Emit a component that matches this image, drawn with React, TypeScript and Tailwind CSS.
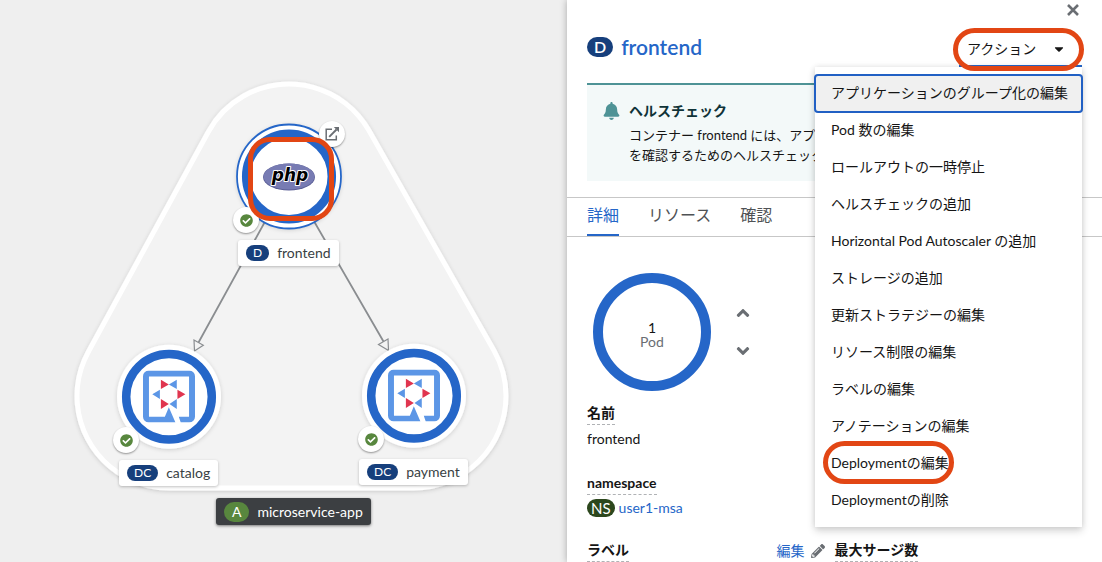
import React from "react";
import {
  FaAngleDown,
  FaAngleUp,
  FaBell,
  FaCaretDown,
  FaCheckCircle,
  FaPencilAlt,
} from "react-icons/fa";

const actions = [
  "アプリケーションのグループ化の編集",
  "Pod 数の編集",
  "ロールアウトの一時停止",
  "ヘルスチェックの追加",
  "Horizontal Pod Autoscaler の追加",
  "ストレージの追加",
  "更新ストラテジーの編集",
  "リソース制限の編集",
  "ラベルの編集",
  "アノテーションの編集",
  "Deploymentの編集",
  "Deploymentの削除",
];

function QuarkusIcon({ x, y }: { x: number; y: number }) {
  return (
    <svg x={x} y={y} width="52" height="52" viewBox="0 0 157 157">
      <path
        fill="#5c96e6"
        d="M78 111 98 157H17A17 17 0 0 1 0 140V17A17 17 0 0 1 17 0H140A17 17 0 0 1 157 17V140A17 17 0 0 1 140 157H114L108 140H139V18H18V140H66Z"
      />
      <path fill="#e0354f" d="M54 28V56L78 42ZM104 58V86L128 72ZM54 86V116L78 101Z" />
      <path fill="#5c96e6" d="M102 28V56L78 42ZM51 58V86L28 72ZM102 86V116L80 101Z" />
    </svg>
  );
}

function PhpIcon() {
  return (
    <g>
      <ellipse cx="289" cy="177" rx="26" ry="13.5" fill="#5b5f96" />
      <ellipse cx="289" cy="176.600" rx="25.500" ry="13" fill="#777bb3" />
      <text
        x="290"
        y="181"
        textAnchor="middle"
        fill="#000"
        stroke="#fff"
        strokeWidth="2"
        strokeLinejoin="round"
        paintOrder="stroke"
        className="font-['DejaVu_Sans',sans-serif] text-[17px] font-bold italic"
      >
        php
      </text>
    </g>
  );
}

function StatusBadge({ className }: { className: string }) {
  return (
    <span
      className={`absolute flex size-[26px] items-center justify-center rounded-full bg-white shadow-[0_1px_2px_rgba(0,0,0,0.4)] ${className}`}
    >
      <FaCheckCircle className="size-[13px] text-[#58873e]" />
    </span>
  );
}

function NodeLabel({ kind, name, className }: { kind: string; name: string; className: string }) {
  return (
    <div
      className={`absolute flex h-[26px] items-center gap-2 rounded-[3px] bg-white px-2 text-sm whitespace-nowrap text-[#393f44] shadow-[0_1px_3px_rgba(0,0,0,0.25)] ${className}`}
    >
      <span className="rounded-full bg-[#163f7c] px-[7px] text-xs leading-4 text-white">{kind}</span>
      {name}
    </div>
  );
}

function Topology() {
  const hull = "289,176 169,396 414,396";
  return (
    <section aria-label="トポロジー" className="relative min-w-0 flex-1 overflow-hidden bg-[#efefef]">
      <svg className="absolute top-0 left-0" width="567" height="562" viewBox="0 0 567 562">
        <defs>
          <filter id="soft" filterUnits="userSpaceOnUse" x="0" y="0" width="567" height="562">
            <feDropShadow dx="0" dy="1" stdDeviation="2" floodColor="#000" floodOpacity="0.16" />
          </filter>
        </defs>
        <g strokeLinejoin="round">
          <polygon points={hull} fill="#fff" stroke="#fff" strokeWidth="189" filter="url(#soft)" />
          <polygon points={hull} fill="#f3f3f3" stroke="#f3f3f3" strokeWidth="179" />
        </g>
        <g stroke="#8a8d90" strokeWidth="1.800" fill="none">
          <path d="M289 178 198.500 342.500M289 178 383.500 341.500" />
          <path strokeWidth="1.200" fill="#f3f3f3" d="M194.500 351 194 340 203.300 345.200ZM388.500 350.500 378.500 344.500 388 339Z" />
        </g>
        <g filter="url(#soft)" fill="#fff">
          <circle cx="289" cy="176.500" r="52.500" />
          <circle cx="169" cy="396.700" r="52" />
          <circle cx="414" cy="395.700" r="52" />
        </g>
        <g fill="none" stroke="#2566c8">
          <circle cx="289" cy="176.500" r="52" strokeWidth="1.800" />
          <g strokeWidth="8.500">
            <circle cx="289" cy="176.500" r="42.800" />
            <circle cx="169" cy="396.700" r="42.800" />
            <circle cx="414" cy="395.700" r="42.800" />
          </g>
        </g>
        <PhpIcon />
        <QuarkusIcon x={143} y={370.5} />
        <QuarkusIcon x={388} y={369.5} />
      </svg>

      <a
        href="#open"
        aria-label="URL を開く"
        className="absolute top-[121px] left-[319px] flex size-[26px] items-center justify-center rounded-full bg-white shadow-[0_1px_2px_rgba(0,0,0,0.4)]"
      >
        <svg width="14" height="14" viewBox="0 0 14 14" fill="none" stroke="#6a6e73">
          <path strokeWidth="1.500" d="M7 2.200H1.200V12.800H11.300V8.500" />
          <path strokeWidth="1.900" d="M4.200 9.800 11.500 2.500" />
          <path fill="#6a6e73" stroke="none" d="M8.800 0H14V5.200Z" />
        </svg>
      </a>
      <StatusBadge className="top-[207px] left-[233px]" />
      <StatusBadge className="top-[427px] left-[113px]" />
      <StatusBadge className="top-[426px] left-[358px]" />
      <div className="absolute top-[137px] left-[248px] h-[84px] w-[86px] rounded-[22px] border-5 border-[#e24614]" />

      <NodeLabel kind="D" name="frontend" className="top-[240px] left-[238px]" />
      <NodeLabel kind="DC" name="catalog" className="top-[460px] left-[119px]" />
      <NodeLabel kind="DC" name="payment" className="top-[459px] left-[359px]" />
      <div className="absolute top-[498px] left-[216px] flex h-[27px] items-center gap-2 rounded-[3px] bg-[#3c3f42] px-2 text-sm whitespace-nowrap text-white shadow-[0_1px_3px_rgba(0,0,0,0.5)]">
        <span className="rounded-full bg-[#58873e] px-2 leading-5">A</span>
        <span>microservice-app</span>
      </div>
    </section>
  );
}

function ActionMenu() {
  return (
    <div className="relative">
      <button
        type="button"
        aria-expanded="true"
        className="flex h-[33px] w-[123px] items-center justify-between border-b-2 border-[#2566c8] pr-4 pb-[2px] pl-2 text-sm"
      >
        アクション
        <FaCaretDown className="size-[14px]" />
      </button>
      <div className="pointer-events-none absolute -top-[6px] -right-[2px] z-20 h-[43px] w-[131px] rounded-[22px] border-5 border-[#e24614]" />
      <ul className="absolute top-full right-0 z-10 w-[267px] bg-white py-2 shadow-[0_4px_8px_rgba(3,3,3,0.16),0_0_6px_rgba(3,3,3,0.1)]">
        {actions.map((label, i) => (
          <li key={label} className="relative">
            <button
              type="button"
              className={
                i === 0
                  ? "block w-full rounded-[3px] bg-[#f0f0f0] px-4 pt-[7px] pb-[9px] text-left text-sm leading-[21px] whitespace-nowrap outline-2 outline-offset-[-1px] outline-[#2160c4]"
                  : "block w-full px-4 pt-[7px] pb-[9px] text-left text-sm leading-[21px] whitespace-nowrap"
              }
            >
              {label}
            </button>
            {label === "Deploymentの編集" && (
              <div className="pointer-events-none absolute -top-1 left-2 h-[43px] w-[131px] rounded-[22px] border-5 border-[#e24614]" />
            )}
          </li>
        ))}
      </ul>
    </div>
  );
}

function Term({ children }: { children: React.ReactNode }) {
  return (
    <dt className="w-fit border-b border-dashed border-[#b0b2b5] pb-px text-sm leading-5 font-bold">{children}</dt>
  );
}

function DetailPanel() {
  return (
    <aside className="relative z-10 w-[535px] shrink-0 overflow-hidden bg-white text-[#151515] shadow-[0_0_7px_rgba(0,0,0,0.3)]">
      <div className="flex h-5 justify-end px-5">
        <button type="button" aria-label="閉じる" className="px-[3px]">
          <svg width="12" height="12" viewBox="0 0 12 12" stroke="#6a6e73" strokeWidth="2.600">
            <path d="M1 1 11 11M11 1 1 11" />
          </svg>
        </button>
      </div>
      <header className="flex items-start justify-between px-5 pt-[14px]">
        <h1 className="flex items-center gap-2 text-[21px] leading-[26px] font-semibold text-[#2566c8]">
          <span className="rounded-full bg-[#163f7c] px-[7px] text-base leading-5 text-white">D</span>
          frontend
        </h1>
        <ActionMenu />
      </header>

      <div className="mx-5 mt-4 mb-4 flex h-[98px] gap-[9px] border-t-2 border-[#4e9396] bg-[#f3f9f9] px-4 pt-4">
        <FaBell className="mt-[1px] h-[18px] w-[17px] shrink-0 text-[#4e9396]" />
        <div className="whitespace-nowrap">
          <h2 className="text-sm leading-5 font-bold text-[#0f3338]">ヘルスチェック</h2>
          <p className="mt-1 text-[13px] leading-5">
            コンテナー frontend には、アプリケーションが正常に実行されていること
            <br />
            を確認するためのヘルスチェックがありません。
          </p>
        </div>
      </div>

      <nav className="flex h-10 gap-[29px] border-y border-[#c7c7c7] px-5 text-base text-[#4f5255]">
        <a href="#details" className="border-b-2 border-[#2566c8] leading-[34px] text-[#2566c8]">
          詳細
        </a>
        <a href="#resources" className="leading-[34px]">
          リソース
        </a>
        <a href="#observe" className="leading-[34px]">
          確認
        </a>
      </nav>

      <div className="flex items-center gap-[22px] px-[26px] pt-9">
        <div className="flex size-[118px] flex-col items-center justify-center rounded-full border-10 border-[#2566c8] pt-[6px] text-sm leading-[14px]">
          <span>1</span>
          <span className="text-[#6a6e73]">Pod</span>
        </div>
        <div className="flex flex-col gap-[18px] text-[#6a6e73]">
          <button type="button" aria-label="Pod 数を増やす">
            <FaAngleUp className="size-5" />
          </button>
          <button type="button" aria-label="Pod 数を減らす">
            <FaAngleDown className="size-5" />
          </button>
        </div>
      </div>

      <dl className="grid grid-cols-2 px-5 pt-3 text-sm">
        <div className="col-span-2 h-[70px]">
          <Term>名前</Term>
          <dd className="pt-[3px] leading-[21px]">frontend</dd>
        </div>
        <div className="col-span-2 h-[67px]">
          <Term>namespace</Term>
          <dd className="flex items-center gap-1 pt-[2px] leading-[21px]">
            <span className="rounded-full bg-[#2c471d] px-1 text-[15px] leading-[18px] text-white">NS</span>
            <a href="#namespace" className="text-[#2566c8]">
              user1-msa
            </a>
          </dd>
        </div>
        <div className="flex justify-between pr-[10px]">
          <Term>ラベル</Term>
          <dd>
            <button type="button" className="flex items-center gap-[6px] leading-[21px] text-[#2566c8]">
              編集
              <FaPencilAlt className="size-[14px] text-[#6a6e73]" />
            </button>
          </dd>
        </div>
        <div>
          <Term>最大サージ数</Term>
        </div>
      </dl>
    </aside>
  );
}

export default function App() {
  return (
    <main className="flex min-h-screen font-[Lato,'Noto_Sans_CJK_JP',sans-serif]">
      <Topology />
      <DetailPanel />
    </main>
  );
}
